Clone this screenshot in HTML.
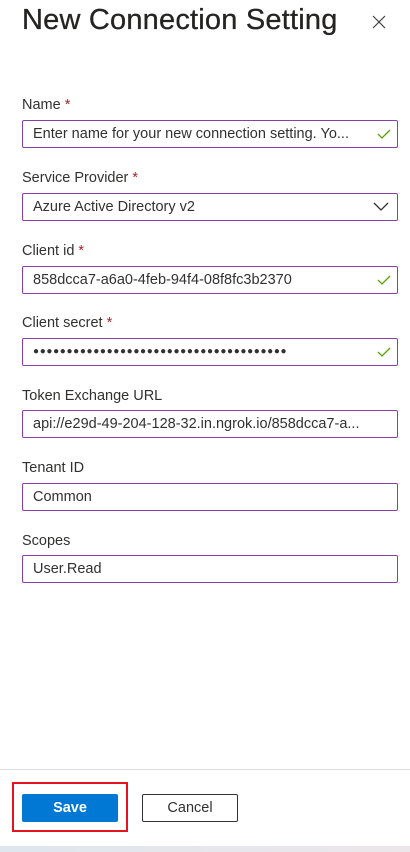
<!DOCTYPE html>
<html><head><style>
body{margin:0;width:410px;height:852px;background:#fff;font-family:"Segoe UI","Liberation Sans",sans-serif;color:#323130;position:relative;overflow:hidden}
h1{position:absolute;left:22px;top:4px;margin:0;font-size:29px;font-weight:400;color:#252423;letter-spacing:0.2px;-webkit-text-stroke:0.3px #252423}
.x{position:absolute;left:371px;top:14px}
.lab{position:absolute;left:22px;font-size:14.5px;color:#323130}
.lab b{color:#a4262c;font-weight:400}
.in{position:absolute;left:22px;height:26px;border:1px solid #8a3fa8;border-radius:2px;font-size:14.5px;line-height:26px;padding-left:10px;box-sizing:content-box;width:364px;white-space:nowrap;overflow:hidden}
.in svg{position:absolute;right:6px;top:7px}
.foot{position:absolute;left:0;top:769px;width:410px;border-top:1px solid #ddd}
.save{position:absolute;left:22px;top:794px;width:96px;height:28px;background:#0078d4;border-radius:2px;color:#fff;font-weight:700;font-size:14.5px;text-align:center;line-height:28px}
.red{position:absolute;left:12px;top:782px;width:112px;height:46px;border:2px solid #e3141f}
.cancel{position:absolute;left:142px;top:794px;width:94px;height:26px;border:1px solid #323130;border-radius:2px;font-size:14.5px;text-align:center;line-height:26px}
.strip{position:absolute;left:0;top:846px;width:410px;height:6px;background:linear-gradient(90deg,#dfe6ee,#ece6ea)}
</style></head><body>
<h1>New Connection Setting</h1>
<svg class="x" width="16" height="16" viewBox="0 0 16 16"><path d="M2 2L14 14M14 2L2 14" stroke="#444" stroke-width="1.2"/></svg>
<div class="lab" style="top:97px">Name <b>*</b></div>
<div class="in" style="top:120px">Enter name for your new connection setting. Yo...<svg width="14" height="12" viewBox="0 0 14 12"><path d="M1 6L5 10L13 2" stroke="#57a300" stroke-width="1.3" fill="none"/></svg></div>
<div class="lab" style="top:170px">Service Provider <b>*</b></div>
<div class="in" style="top:193px">Azure Active Directory v2<svg width="16" height="10" viewBox="0 0 16 10" style="top:8px;right:8px"><path d="M1 1L8 8L15 1" stroke="#323130" stroke-width="1.3" fill="none"/></svg></div>
<div class="lab" style="top:243px">Client id <b>*</b></div>
<div class="in" style="top:266px">858dcca7-a6a0-4feb-94f4-08f8fc3b2370<svg width="14" height="12" viewBox="0 0 14 12"><path d="M1 6L5 10L13 2" stroke="#57a300" stroke-width="1.3" fill="none"/></svg></div>
<div class="lab" style="top:315px">Client secret <b>*</b></div>
<div class="in" style="top:338px;letter-spacing:0.65px;font-size:10px">●●●●●●●●●●●●●●●●●●●●●●●●●●●●●●●●●●●●●●<svg width="14" height="12" viewBox="0 0 14 12"><path d="M1 6L5 10L13 2" stroke="#57a300" stroke-width="1.3" fill="none"/></svg></div>
<div class="lab" style="top:388px">Token Exchange URL</div>
<div class="in" style="top:410px">api://e29d-49-204-128-32.in.ngrok.io/858dcca7-a...</div>
<div class="lab" style="top:460px">Tenant ID</div>
<div class="in" style="top:483px">Common</div>
<div class="lab" style="top:533px">Scopes</div>
<div class="in" style="top:555px">User.Read</div>
<div class="foot"></div>
<div class="red"></div>
<div class="save">Save</div>
<div class="cancel">Cancel</div>
<div class="strip"></div>
</body></html>
